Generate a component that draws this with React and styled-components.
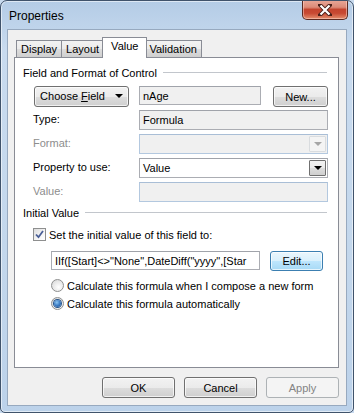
import styled, { createGlobalStyle } from 'styled-components';

const GlobalStyle = createGlobalStyle`
  body {
    margin: 0;
    font-family: "Liberation Sans", Arial, sans-serif;
    font-size: 11px;
    color: #000;
    background: #c8daee;
  }
`;

const Window = styled.div`
  box-sizing: border-box;
  width: 354px;
  height: 413px;
  border: 1px solid #40536b;
  border-radius: 7px 7px 5px 5px;
  background: linear-gradient(180deg, #b4cce6 0%, #c9dbef 12%, #c3d7ec 60%, #bcd2ea 100%);
  box-shadow: inset 0 0 0 1px rgba(255, 255, 255, 0.55);
  display: flex;
  flex-direction: column;
  overflow: hidden;
`;

const TitleBar = styled.div`
  height: 28px;
  display: flex;
  align-items: flex-start;
  justify-content: space-between;
  padding-left: 8px;
`;

const Title = styled.span`
  font-size: 12px;
  margin-top: 8px;
  color: #000;
`;

const CloseButton = styled.div`
  box-sizing: border-box;
  width: 46px;
  height: 20px;
  margin-top: -1px;
  margin-right: 5px;
  border: 1px solid #5b2a22;
  border-top: none;
  border-radius: 0 0 5px 5px;
  background: linear-gradient(180deg, #e9a899 0%, #dc8b78 38%, #c4442e 50%, #c84a33 70%, #e48f6e 100%);
  box-shadow: inset 0 0 0 1px rgba(255, 220, 210, 0.5);
  display: flex;
  align-items: center;
  justify-content: center;
`;

const Client = styled.div`
  flex: 1;
  margin: 0 6px 6px 6px;
  border: 1px solid #97a9bf;
  background: #f0f0f0;
  padding: 7px 7px 7px 6px;
  display: flex;
  flex-direction: column;
`;

const TabRow = styled.div`
  display: flex;
  align-items: flex-end;
  padding-left: 2px;
  height: 20px;
`;

const Tab = styled.div`
  box-sizing: border-box;
  height: ${(p) => (p.$active ? '21px' : '18px')};
  padding: 0 ${(p) => (p.$active ? '8px' : '4px')};
  margin: 0 ${(p) => (p.$active ? '-2px' : '0')} -1px;
  border: 1px solid #898c95;
  border-bottom: ${(p) => (p.$active ? 'none' : '1px solid #898c95')};
  border-left: ${(p) => (p.$first || p.$active ? '1px solid #898c95' : 'none')};
  background: ${(p) => (p.$active ? '#fff' : 'linear-gradient(180deg, #f2f2f2 0%, #ebebeb 50%, #dddddd 51%, #cfcfcf 100%)')};
  position: relative;
  z-index: ${(p) => (p.$active ? 2 : 1)};
  display: flex;
  align-items: ${(p) => (p.$active ? 'flex-start' : 'center')};
  padding-top: ${(p) => (p.$active ? '2px' : '0')};
  white-space: nowrap;
`;

const Panel = styled.div`
  flex: 1;
  border: 1px solid #898c95;
  background: #fff;
  padding: 8px 11px 0 8px;
  display: flex;
  flex-direction: column;
`;

const GroupHeading = styled.div`
  display: flex;
  align-items: center;
  gap: 6px;
  height: 13px;
  margin-top: ${(p) => p.$top || 0}px;

  &::after {
    content: '';
    flex: 1;
    height: 1px;
    background: #c2c6cc;
  }
`;

const FieldGrid = styled.div`
  display: grid;
  grid-template-columns: 106px 189px;
  grid-auto-rows: 20px;
  row-gap: 4px;
  margin: 7px 0 0 10px;
  align-items: center;
`;

const Label = styled.span`
  color: ${(p) => (p.$disabled ? '#8d8d8d' : '#000')};
  align-self: center;
  margin-top: -2px;
`;

const FieldPair = styled.div`
  display: flex;
  justify-content: space-between;
  align-items: flex-start;
  height: 20px;
`;

const Button = styled.div`
  box-sizing: border-box;
  width: ${(p) => p.$w}px;
  height: ${(p) => p.$h || 21}px;
  border: 1px solid ${(p) => (p.$disabled ? '#adb2b5' : p.$default ? '#3c7fb1' : '#707070')};
  border-radius: 3px;
  background: ${(p) =>
    p.$disabled
      ? '#f4f4f4'
      : p.$default
      ? 'linear-gradient(180deg, #eaf6fd 0%, #d9f0fc 50%, #bee6fd 51%, #a7d9f5 100%)'
      : 'linear-gradient(180deg, #f2f2f2 0%, #ebebeb 50%, #dddddd 51%, #cfcfcf 100%)'};
  box-shadow: inset 0 0 0 1px ${(p) => (p.$disabled ? '#f4f4f4' : 'rgba(255,255,255,0.7)')};
  color: ${(p) => (p.$disabled ? '#838383' : '#000')};
  display: flex;
  align-items: center;
  justify-content: center;
  gap: 10px;
  margin-left: ${(p) => p.$ml || 0}px;
`;

const TextBox = styled.div`
  box-sizing: border-box;
  width: ${(p) => p.$w}px;
  height: ${(p) => p.$h || 20}px;
  border: 1px solid ${(p) => (p.$blue ? '#b3c8df' : '#abadb3')};
  border-top-color: ${(p) => (p.$blue ? '#a9bed6' : '#a0a3aa')};
  background: ${(p) => (p.$grey ? '#f0f0f0' : '#fff')};
  padding: 0 3px;
  display: flex;
  align-items: center;
  white-space: nowrap;
  overflow: hidden;
`;

const Combo = styled(TextBox)`
  padding-right: 0;
  justify-content: space-between;
`;

const DropButton = styled.div`
  box-sizing: border-box;
  width: 17px;
  height: 16px;
  margin-right: 1px;
  border: 1px solid ${(p) => (p.$disabled ? '#d9dcdf' : '#707070')};
  border-radius: 1px;
  background: ${(p) => (p.$disabled ? '#f4f4f4' : 'linear-gradient(180deg, #f2f2f2 0%, #ebebeb 50%, #dddddd 51%, #cfcfcf 100%)')};
  display: flex;
  align-items: center;
  justify-content: center;
`;

const Arrow = styled.span`
  width: 0;
  height: 0;
  border-left: 4px solid transparent;
  border-right: 4px solid transparent;
  border-top: 4px solid ${(p) => (p.$disabled ? '#a6a6a6' : '#000')};
`;

const CheckRow = styled.div`
  display: flex;
  align-items: center;
  gap: 3px;
  margin: ${(p) => p.$m};
`;

const Box = styled.span`
  box-sizing: border-box;
  width: 13px;
  height: 13px;
  border: 1px solid #8e8f8f;
  background: linear-gradient(135deg, #dcdcdc 0%, #f6f6f6 60%, #ffffff 100%);
  display: flex;
  align-items: center;
  justify-content: center;
`;

const Radio = styled.span`
  box-sizing: border-box;
  width: 13px;
  height: 13px;
  border-radius: 50%;
  border: 1px solid #8e8f8f;
  background: radial-gradient(circle at 60% 65%, #ffffff 0%, #e8e8e8 55%, #d0d0d0 100%);
  display: flex;
  align-items: center;
  justify-content: center;

  &::after {
    content: '';
    display: ${(p) => (p.$on ? 'block' : 'none')};
    width: 7px;
    height: 7px;
    border-radius: 50%;
    background: radial-gradient(circle at 40% 35%, #8cc6f2 0%, #3b7bc4 50%, #1d4f8c 100%);
    box-shadow: 0 0 0 1px #25538a;
  }
`;

const FormulaRow = styled.div`
  display: flex;
  align-items: flex-start;
  margin: 10px 0 0 28px;
`;

const Footer = styled.div`
  display: flex;
  justify-content: flex-end;
  gap: 9px;
  margin-top: 9px;
  height: 21px;
`;

const Check = () => (
  <svg width="9" height="9" viewBox="0 0 9 9">
    <path d="M1 4.5 L3.5 7.2 L8 1" fill="none" stroke="#4a5f97" strokeWidth="1.8" />
  </svg>
);

const CloseX = () => (
  <svg width="14" height="12" viewBox="0 0 14 12">
    <path d="M2 1 L12 11 M12 1 L2 11" stroke="#4b2019" strokeWidth="4" strokeLinecap="square" />
    <path d="M2.5 1.5 L11.5 10.5 M11.5 1.5 L2.5 10.5" stroke="#fff" strokeWidth="2.2" />
  </svg>
);

const App = () => (
  <>
    <GlobalStyle />
    <Window>
      <TitleBar>
        <Title>Properties</Title>
        <CloseButton>
          <CloseX />
        </CloseButton>
      </TitleBar>
      <Client>
        <TabRow>
          <Tab $first>Display</Tab>
          <Tab>Layout</Tab>
          <Tab $active>Value</Tab>
          <Tab>Validation</Tab>
        </TabRow>
        <Panel>
          <GroupHeading>Field and Format of Control</GroupHeading>
          <FieldGrid>
            <Button $w={95} $ml={1}>
              <span>
                Choose <u>F</u>ield
              </span>
              <Arrow />
            </Button>
            <FieldPair>
              <TextBox $w={122} $h={19} $grey>
                nAge
              </TextBox>
              <Button $w={55}>New...</Button>
            </FieldPair>
            <Label>Type:</Label>
            <TextBox $w={189} $grey>
              Formula
            </TextBox>
            <Label $disabled>Format:</Label>
            <Combo $w={189} $grey $blue>
              <span />
              <DropButton $disabled>
                <Arrow $disabled />
              </DropButton>
            </Combo>
            <Label>Property to use:</Label>
            <Combo $w={189}>
              <span>Value</span>
              <DropButton>
                <Arrow />
              </DropButton>
            </Combo>
            <Label $disabled>Value:</Label>
            <TextBox $w={189} $grey $blue />
          </FieldGrid>
          <GroupHeading $top={4}>Initial Value</GroupHeading>
          <CheckRow $m="9px 0 0 10px">
            <Box>
              <Check />
            </Box>
            <span>Set the initial value of this field to:</span>
          </CheckRow>
          <FormulaRow>
            <TextBox $w={209} $h={19}>
              IIf([Start]&lt;&gt;"None",DateDiff("yyyy",[Star
            </TextBox>
            <Button $w={53} $h={20} $ml={10} $default>
              Edit...
            </Button>
          </FormulaRow>
          <CheckRow $m="8px 0 0 28px">
            <Radio />
            <span>Calculate this formula when I compose a new form</span>
          </CheckRow>
          <CheckRow $m="5px 0 0 28px">
            <Radio $on />
            <span>Calculate this formula automatically</span>
          </CheckRow>
        </Panel>
        <Footer>
          <Button $w={73}>OK</Button>
          <Button $w={73}>Cancel</Button>
          <Button $w={73} $disabled>
            Apply
          </Button>
        </Footer>
      </Client>
    </Window>
  </>
);

export default App;
